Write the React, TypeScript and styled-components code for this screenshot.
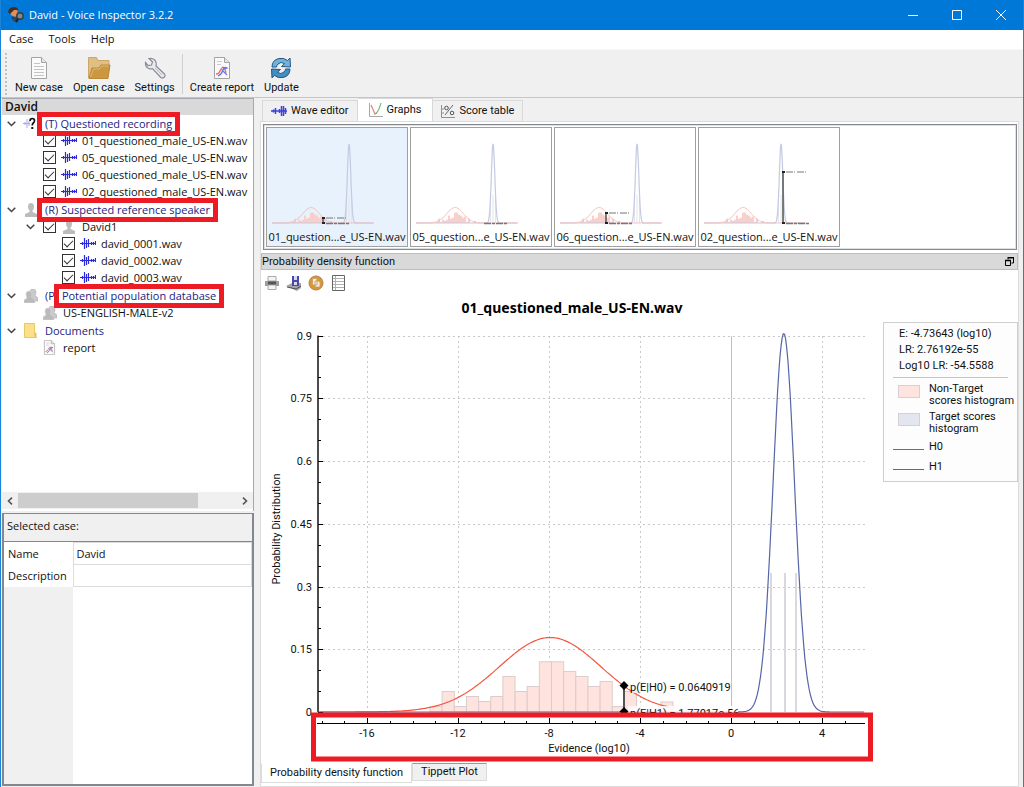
import React, { useState } from "react";
import styled, { createGlobalStyle, css } from "styled-components";

const UI = `"Open Sans", "Noto Sans", sans-serif`;
const COMPACT = `Roboto, "Liberation Sans", sans-serif`;

const GlobalStyle = createGlobalStyle`
  * { box-sizing: border-box; }
  body { margin: 0; background: #f0f0f0; }
  button, input { font: inherit; color: inherit; margin: 0; padding: 0; border: 0; background: none; border-radius: 0; }
  svg { display: block; }
`;

/* ---------- window frame ---------- */

const Window = styled.div`
  display: flex;
  flex-direction: column;
  min-height: 100vh;
  border: 1px solid #1c83d8;
  border-top: 0;
  background: #f0f0f0;
  color: #111;
  font: 11px/16px ${UI};
`;

const TitleBar = styled.header`
  display: flex;
  align-items: center;
  height: 30px;
  padding-left: 7px;
  background: #0078d7;
  color: #fff;
`;

const WindowTitle = styled.h1`
  flex: 1;
  margin: 0 0 0 4px;
  font: 11px/16px ${UI};
`;

const CaptionButton = styled.button`
  display: grid;
  place-items: center;
  width: 44px;
  height: 30px;
`;

const MenuBar = styled.nav`
  display: flex;
  align-items: flex-start;
  gap: 15px;
  height: 20px;
  padding: 0 8px;
  background: #fff;
  border-bottom: 1px solid #f6f6f6;
`;

const MenuButton = styled.button`
  line-height: 18px;
`;

const Toolbar = styled.div`
  display: flex;
  align-items: center;
  gap: 10px;
  height: 48px;
  padding-left: 4px;
  border-bottom: 1px solid #c6c6c6;
`;

const Grip = styled.span`
  width: 0;
  height: 42px;
  margin-right: -2px;
  border-left: 2px dotted #c2c2c2;
`;

const ToolButton = styled.button`
  display: flex;
  flex-direction: column;
  align-items: center;
  gap: 1px;
  padding-top: 6px;
  font: 11px/16px ${COMPACT};
`;

const Divider = styled.span`
  width: 1px;
  height: 40px;
  margin: 0 -3px;
  background: #cfcfcf;
`;

const Main = styled.main`
  display: grid;
  grid-template-columns: 252px minmax(0, 1fr);
  gap: 6px;
  flex: 1;
  padding-left: 1px;
  padding-right: 4px;
`;

/* ---------- left side ---------- */

const Side = styled.aside`
  display: flex;
  flex-direction: column;
  gap: 2px;
  padding-bottom: 1px;
`;

const TreePanel = styled.section`
  display: flex;
  flex-direction: column;
  flex: 1;
  border: 1px solid #a5a8ad;
  border-left: 0;
  border-bottom: 0;
  background: #fff;
`;

const TreeHeader = styled.h2`
  margin: 0;
  padding-left: 3px;
  background: #d9d9d9;
  font: 600 12px/16px ${UI};
`;

const Tree = styled.div`
  flex: 1;
`;

const Group = styled.div`
  margin-bottom: 1px;
`;

const Row = styled.div<{ $indent?: number }>`
  display: flex;
  align-items: center;
  height: 17px;
  padding-left: ${(p) => (p.$indent ?? 0) * 19}px;
  white-space: nowrap;
`;

const slot = css`
  display: grid;
  place-items: center;
  flex: none;
  width: 19px;
  height: 17px;
`;

const Slot = styled.span`
  ${slot}
`;

const Expander = styled.button`
  ${slot}
`;

const CheckLabel = styled.label`
  display: flex;
  align-items: center;
`;

const Check = styled.input`
  appearance: none;
  position: relative;
  flex: none;
  width: 13px;
  height: 13px;
  margin: 0 3px;
  border: 1px solid #333;
  background: #fff;

  &:checked::after {
    content: "";
    position: absolute;
    left: 3px;
    top: 1px;
    width: 8px;
    height: 4px;
    border: solid #333;
    border-width: 0 0 1px 1px;
    transform: translate(-2px, 1px) rotate(-45deg);
  }
`;

const ItemText = styled.span<{ $group?: boolean }>`
  padding-left: ${(p) => (p.$group ? 5 : 4)}px;
  color: ${(p) => (p.$group ? "#23237f" : "#111")};
`;

const Marked = styled.span<{ $shift?: boolean }>`
  position: relative;
  z-index: 1;
  margin-left: ${(p) => (p.$shift ? 7 : 0)}px;

  &::before {
    content: "";
    position: absolute;
    z-index: -1;
    inset: -4px -8px -5px;
    border: 5px solid #ed1c24;
    background: #fff;
  }
`;

const ScrollBar = styled.div`
  display: flex;
  align-items: center;
  height: 17px;
  margin-bottom: 2px;
  background: #f0f0f0;
`;

const ScrollArrow = styled.button`
  display: grid;
  place-items: center;
  width: 16px;
  height: 15px;
`;

const ScrollTrack = styled.div`
  flex: 1;
`;

const ScrollThumb = styled.div`
  width: 82%;
  height: 15px;
  background: #cdcdcd;
`;

const Properties = styled.section`
  display: flex;
  flex-direction: column;
  flex: 0 0 273px;
  border: 2px solid #828790;
  border-top-width: 1px;
  background: #fff;
`;

const PropertiesTitle = styled.h2`
  margin: 0;
  padding: 4px 3px 7px;
  border-bottom: 1px solid #828790;
  background: #f0f0f0;
  font: 11px/16px ${UI};
`;

const PropertyTable = styled.table`
  width: 100%;
  border-collapse: collapse;

  th {
    width: 69px;
    height: 22px;
    padding: 0 4px;
    text-align: left;
    font-weight: 400;
  }
  td {
    padding: 0 3px;
    border: 1px solid #dcdcdc;
  }
  input {
    display: block;
    width: 100%;
    height: 20px;
  }
`;

const PropertyFiller = styled.div`
  flex: 1;
  width: 69px;
  background: #f0f0f0;
`;

/* ---------- right side ---------- */

const Content = styled.section`
  display: flex;
  flex-direction: column;
  min-width: 0;
`;

const TabStrip = styled.div`
  display: flex;
  align-items: flex-end;
  height: 23px;
  padding-left: 2px;
`;

const Tab = styled.button<{ $active?: boolean }>`
  display: flex;
  align-items: center;
  gap: 4px;
  height: ${(p) => (p.$active ? 23 : 21)}px;
  padding: 0 ${(p) => (p.$active ? 11 : 8)}px;
  border: 1px solid #d9d9d9;
  border-bottom: 0;
  background: ${(p) => (p.$active ? "#fff" : "#f0f0f0")};
  font: 11px/16px ${COMPACT};
  & + & { border-left: 0; }
`;

const Page = styled.div`
  display: flex;
  flex-direction: column;
  flex: 1;
  padding-top: 2px;
  border: 1px solid #dcdcdc;
  background: #fff;
`;

const ThumbList = styled.div`
  display: flex;
  gap: 2px;
  margin: 0 1px 3px 2px;
  padding: 2px;
  border: 1px solid #828790;
  box-shadow: inset 0 0 0 1px #dfe1e4;
`;

const Thumb = styled.button<{ $active?: boolean }>`
  flex: none;
  width: 142px;
  padding-bottom: 1px;
  border: 1px solid #a0a0a0;
  background: ${(p) => (p.$active ? "#e8f2fc" : "#fff")};
  font: 11px/16px ${UI};
  white-space: nowrap;
`;

const DockHeader = styled.h2`
  display: flex;
  align-items: center;
  justify-content: space-between;
  height: 17px;
  margin: 0;
  border: 1px solid #bdbdbd;
  background: #d9d9d9;
  font: 11px/15px ${COMPACT};
`;

const GraphTools = styled.div`
  display: flex;
  gap: 6px;
  padding: 5px 3px 6px;
`;

const IconButton = styled.button`
  display: grid;
  place-items: center;
  width: 16px;
  height: 16px;
`;

const GraphArea = styled.div`
  display: grid;
  grid-template-columns: minmax(0, 1fr) 135px;
  align-items: start;
`;

const GraphTitle = styled.h3`
  margin: 0;
  padding-bottom: 6px;
  text-align: center;
  color: #000;
  font: bold 14px/22px "Noto Sans", sans-serif;
`;

const Plot = styled.svg`
  width: 100%;
  height: auto;
  font: 11px ${COMPACT};
`;

const Legend = styled.div`
  margin-top: 25px;
  padding: 3px 9px 6px;
  border: 1px solid #cfcfcf;
  background: #fdfdfd;
  font: 11px/12px ${COMPACT};
`;

const Stats = styled.div`
  margin-bottom: 5px;
  padding: 0 0 3px 6px;
  border-bottom: 1px solid #c4c4c4;
  line-height: 16px;
  white-space: nowrap;
`;

const LegendRows = styled.div`
  display: flex;
  flex-direction: column;
  gap: 4px;
`;

const LegendRow = styled.div<{ $line?: boolean }>`
  display: grid;
  grid-template-columns: 31px 1fr;
  gap: 5px;
  align-items: ${(p) => (p.$line ? "center" : "start")};
  line-height: ${(p) => (p.$line ? 16 : 12)}px;
  white-space: nowrap;
`;

const Swatch = styled.span<{ $color: string }>`
  width: 22px;
  height: 13px;
  margin: 2px auto 0;
  border: 1px solid #d6d0d4;
  background: ${(p) => p.$color};
`;

const LineSample = styled.span<{ $color: string }>`
  margin-top: 4px;
  border-top: 1px solid ${(p) => p.$color};
`;

const BottomTabs = styled.div`
  display: flex;
  align-items: flex-start;
  margin-top: auto;
  padding-bottom: 3px;
`;

const BottomTab = styled.button<{ $active?: boolean }>`
  height: ${(p) => (p.$active ? 20 : 18)}px;
  padding: 0 8px;
  border: 1px solid #dcdcdc;
  border-top-color: ${(p) => (p.$active ? "#fff" : "#9a9a9a")};
  background: ${(p) => (p.$active ? "#fff" : "#f0f0f0")};
  font: 11px/16px ${COMPACT};
`;

/* ---------- icons ---------- */

const AppIcon = () => (
  <svg width="17" height="16" viewBox="0 0 17 16">
    <path d="M2 4Q5 0 9 3l1 4-3 3-4-2Z" fill="#e0905a" />
    <path d="M0 5Q1 0 6 0q4 0 4 3L6 3 4 5 2 7Z" fill="#4a2c1e" />
    <path d="M3 10q2-1 4 0l3 1v4q-5 1-7-5Z" fill="#30445a" />
    <circle cx="12" cy="9" r="3.200" fill="#7d8890" stroke="#3a3a3a" strokeWidth="1.400" />
    <path d="m10 12-2 3" stroke="#222" strokeWidth="2" />
  </svg>
);

const DocIcon = ({ chart = false, size = 22 }: { chart?: boolean; size?: number }) => (
  <svg width={size} height={size} viewBox="0 0 22 22">
    <path d="M3.500.5h10l5 5v16h-15Z" fill="#fafafa" stroke="#a3a3a3" />
    <path d="M13.500.5v5h5" fill="#e6e6e6" stroke="#a3a3a3" />
    {chart ? (
      <>
        <path d="M6 4.500h5M6 7.500h4" stroke="#c9c9c9" />
        <path d="M5 17q3 0 4-3t3-4q2 1 3 6" fill="none" stroke="#ee6a6a" strokeWidth="1.300" />
        <path d="M7 19q4-2 5-6t4-2l-5 2 5 5" fill="none" stroke="#6a79e8" strokeWidth="1.300" />
      </>
    ) : (
      <path d="M6 6.500h6M6 9.500h10M6 12.500h10M6 15.500h10M6 18.500h10" stroke="#c4c4c4" />
    )}
  </svg>
);

const OpenFolderIcon = () => (
  <svg width="24" height="22" viewBox="0 0 24 22">
    <path d="M1.500 21V.5h8l1.500 3h11V12L20 21Z" fill="#e0bf86" stroke="#cfa765" />
    <path d="M2 21.500 5 11h7l2-3h9l-2 13.500Z" fill="#cb9740" stroke="#ba8838" />
    <path d="m3.500 20 3-8h6l2-3h7" fill="none" stroke="#e0b873" />
  </svg>
);

const WrenchIcon = () => (
  <svg width="22" height="22" viewBox="0 0 22 22">
    <path
      d="M5 1.500 8.500 5 7.500 8 4 8.500 1.500 5.500Q1 10 4.500 11.500q2 .8 4 .2l8 8.500q2 1.500 3.700 0t0-3.500L12 9q1-4-1.500-6.300Q8 .8 5 1.500Z"
      fill="#e8e9ee"
      stroke="#8b8d97"
      strokeWidth="1.200"
    />
    <path d="m11 11 7 7" stroke="#b9bbc4" />
  </svg>
);

const UpdateIcon = () => (
  <svg width="22" height="22" viewBox="0 0 22 22">
    <path d="M2 10Q2 3 9 1.500q5-1 8.500 2L20 1l.5 9-9-.5 3-2.800Q11 4 8 7q-1.500 1.500-1.500 3Z" fill="#6fb2dc" stroke="#25587e" />
    <path d="M20 12q0 7-7 8.500-5 1-8.500-2L2 21l-.5-9 9 .5-3 2.800Q11 18 14 15q1.500-1.500 1.500-3Z" fill="#3f8fc4" stroke="#25587e" />
  </svg>
);

const WaveIcon = () => (
  <svg width="16" height="13" viewBox="0 0 16 13">
    <path
      d="M0 6.500h16M2.500 5v3M4.500 1v11M6.500 3v8M8.500 2v8M11.500 5v3M13.500 5v3M15.500 4v4"
      stroke="#2a2ad8"
      strokeWidth="1.200"
    />
  </svg>
);

const QuestionWaveIcon = () => (
  <svg width="15" height="13" viewBox="0 0 15 13">
    <path d="M0 6.500h7M2 5v3M4 2v9M6 4v5" stroke="#a9a9f2" />
    <path d="M7 4q0-2.500 2.300-2.500T11.500 4q0 1-1.200 2T9.300 8.500" fill="none" stroke="#111" strokeWidth="1.700" />
    <path d="M8.300 10h2v2h-2Z" fill="#111" />
  </svg>
);

const WaveEditorIcon = () => (
  <svg width="16" height="12" viewBox="0 0 16 12">
    <path d="M0 6h16M4.500 3v6M2.500 4.500v3M8.500 4v4M10.500 1v10M12.500 1v10M14.500 3v6" stroke="#4040d8" strokeWidth="1.500" />
  </svg>
);

const PersonIcon = () => (
  <svg width="14" height="14" viewBox="0 0 14 14">
    <path d="M4 4q0-4 3-4t3 4q0 2-1.500 3.500V9L13 11v3H1v-3l4.500-2V7.500Q4 6 4 4Z" fill="#bcbcbc" />
  </svg>
);

const PeopleIcon = () => (
  <svg width="14" height="14" viewBox="0 0 14 14">
    <path d="M6 3q0-3 3-3t3 3.500Q12 5 11 6.500L14 9v3H7Z" fill="#c9c9c9" stroke="#b0b0b0" strokeWidth=".6" />
    <path d="M2 5q0-3 3-3t3 3q0 2-1 3l4 3v3H0v-3l3-2Q2 7 2 5Z" fill="#bababa" stroke="#d8d8d8" strokeWidth=".6" />
  </svg>
);

const FolderIcon = () => (
  <svg width="13" height="15" viewBox="0 0 13 15">
    <path d="M.5.500h10V12l2 2.500H.5Z" fill="#fbe08c" stroke="#e9c966" />
    <path d="M10.500 9v5.500h2V10Z" fill="#e8c560" />
  </svg>
);

const GraphsIcon = () => (
  <svg width="14" height="14" viewBox="0 0 14 14">
    <path d="M.5 0v13.500H14" fill="none" stroke="#a9a9a9" />
    <path d="m2 2 4 9 2-1" fill="none" stroke="#ee7a70" strokeWidth="1.200" />
    <path d="M5 11q4 0 7-11" fill="none" stroke="#73bd7b" strokeWidth="1.200" />
  </svg>
);

const ScoreIcon = () => (
  <svg width="14" height="13" viewBox="0 0 14 13">
    <path d="M.5 0v12.500H14M1 4h2M1 8h2" fill="none" stroke="#909090" />
    <circle cx="5.500" cy="3" r="1.800" fill="none" stroke="#555" />
    <circle cx="11" cy="8" r="1.800" fill="none" stroke="#555" />
    <path d="m12 0-8 10" stroke="#666" />
  </svg>
);

const PrintIcon = () => (
  <svg width="16" height="14" viewBox="0 0 16 14">
    <path d="M1 5h14v5H1Z" fill="#9d9d9d" />
    <path d="M4 .5h8V5H4ZM4 9h8v4.500H4Z" fill="#f4f4f4" stroke="#a8a8a8" />
    <path d="M4 5.500h8v3H4Z" fill="#555" />
  </svg>
);

const ExportIcon = () => (
  <svg width="16" height="15" viewBox="0 0 16 15">
    <path d="m0 10 6-3h9v5l-4 3Z" fill="#a4a4aa" />
    <path d="m1 11 9 2 5-3" stroke="#4c4c55" fill="none" />
    <path d="M6 0h7v10H6Z" fill="#4a4aa6" />
    <path d="M8 0h3v4H8ZM8 6h3v3H8Z" fill="#d9d9f2" />
  </svg>
);

const CopyIcon = () => (
  <svg width="16" height="16" viewBox="0 0 16 16">
    <circle cx="8" cy="8" r="7" fill="#dd9632" stroke="#a88450" />
    <path d="M4.500 3.500H8l1 1V10H4.500ZM7 6h3.500l1.500 1.500V12H7Z" fill="#f7eedd" stroke="#c79a5c" strokeWidth=".8" />
  </svg>
);

const ListIcon = () => (
  <svg width="13" height="16" viewBox="0 0 13 16">
    <path d="M.5.500h12v15H.5Z" fill="#fff" stroke="#666" />
    <path d="M3.500 1v14M1 3.500h11M1 6.500h11M1 9.500h11M1 12.500h11" stroke="#b0b0b0" />
  </svg>
);

const Chevron = () => (
  <svg width="9" height="6" viewBox="0 0 9 6">
    <path d="m.7.700 3.800 3.800L8.300.7" fill="none" stroke="#444" strokeWidth="1.500" />
  </svg>
);

const SideArrow = ({ right = false }: { right?: boolean }) => (
  <svg width="6" height="8" viewBox="0 0 6 8">
    <path d={right ? "m1 .7 3.500 3.300L1 7.300" : "M5 .7 1.500 4 5 7.300"} fill="none" stroke="#555" strokeWidth="1.600" />
  </svg>
);

/* ---------- tree ---------- */

const Recording = ({ name, indent }: { name: string; indent: number }) => (
  <Row $indent={indent}>
    <CheckLabel>
      <Check type="checkbox" defaultChecked />
      <Slot><WaveIcon /></Slot>
      <ItemText>{name}</ItemText>
    </CheckLabel>
  </Row>
);

const GroupRow = ({ icon, children }: { icon: React.ReactNode; children: React.ReactNode }) => (
  <Row>
    <Expander aria-label="Collapse group"><Chevron /></Expander>
    <Slot>{icon}</Slot>
    <ItemText $group>{children}</ItemText>
  </Row>
);

const CaseTree = () => (
  <Tree>
    <Group>
      <GroupRow icon={<QuestionWaveIcon />}><Marked>(T) Questioned recording</Marked></GroupRow>
      {["01", "05", "06", "02"].map((n) => (
        <Recording key={n} name={`${n}_questioned_male_US-EN.wav`} indent={2} />
      ))}
    </Group>
    <Group>
      <GroupRow icon={<PersonIcon />}><Marked>(R) Suspected reference speaker</Marked></GroupRow>
      <Row $indent={1}>
        <Expander aria-label="Collapse David1"><Chevron /></Expander>
        <CheckLabel>
          <Check type="checkbox" defaultChecked />
          <Slot><PersonIcon /></Slot>
          <ItemText>David1</ItemText>
        </CheckLabel>
      </Row>
      {[1, 2, 3].map((n) => (
        <Recording key={n} name={`david_000${n}.wav`} indent={3} />
      ))}
    </Group>
    <Group>
      <GroupRow icon={<PeopleIcon />}>(P<Marked $shift>Potential population database</Marked></GroupRow>
      <Row $indent={2}>
        <Slot><PeopleIcon /></Slot>
        <ItemText>US-ENGLISH-MALE-v2</ItemText>
      </Row>
    </Group>
    <Group>
      <GroupRow icon={<FolderIcon />}>Documents</GroupRow>
      <Row $indent={2}>
        <Slot><DocIcon chart size={15} /></Slot>
        <ItemText>report</ItemText>
      </Row>
    </Group>
  </Tree>
);

/* ---------- charts ---------- */

const gauss = (mean: number, sigma: number, peak: number) => (e: number) =>
  peak * Math.exp(-((e - mean) ** 2) / (2 * sigma * sigma));

const h0 = gauss(-7.95, 2.24, 0.178);
const h1 = gauss(2.32, 0.47, 0.905);

const px = (e: number) => 470 + e * 22.75;
const py = (p: number) => 387 - p * 418.3;

const curve = (f: (e: number) => number, from: number, to: number, x = px, y = py) => {
  const points: string[] = [];
  for (let e = from; e <= to; e += 0.05) points.push(`${x(e).toFixed(1)},${y(f(e)).toFixed(1)}`);
  return points.join(" ");
};

const bins = [
  0.013, 0.049, 0.013, 0.037, 0.025, 0.037, 0.085, 0.049, 0.061, 0.12, 0.12, 0.097, 0.085, 0.061, 0.073, 0.013,
  0.049, 0, 0, 0.024,
];
const binWidth = 12.15;
const binStart = 169;

const yTicks = [0, 0.15, 0.3, 0.45, 0.6, 0.75, 0.9];
const xTicks = [-16, -12, -8, -4, 0, 4];
const minorX = Array.from({ length: 24 }, (_, i) => i - 18);
const minorY = Array.from({ length: 18 }, (_, i) => i * 0.05);

const DensityPlot = () => (
  <Plot viewBox="0 0 622 438" role="img" aria-label="Probability density function">
    <g stroke="#c9c9c9" strokeDasharray="2 3">
      {yTicks.slice(1).map((t) => <line key={t} x1="57" x2="604" y1={Math.round(py(t)) + 0.5} y2={Math.round(py(t)) + 0.5} />)}
      {xTicks.filter((t) => t !== 0).map((t) => <line key={t} y1="11" y2="387" x1={Math.round(px(t)) + 0.5} x2={Math.round(px(t)) + 0.5} />)}
    </g>
    <line x1="470.500" x2="470.500" y1="11" y2="387" stroke="#c0c0c0" />

    <g fill="#fee3df" stroke="#dccccb">
      {bins.map((b, i) => b > 0 && (
        <rect key={i} x={binStart + i * binWidth} width={binWidth} y={py(b)} height={387 - py(b)} />
      ))}
    </g>
    <g fill="#d8d8de">
      <rect x="509" y="248" width="2" height="139" />
      <rect x="523" y="248" width="2" height="139" />
      <rect x="534" y="248" width="2" height="139" />
    </g>

    <polyline points={curve(h0, -18.1, -2.7)} fill="none" stroke="#f4553f" strokeWidth="1.200" />
    <polyline points={curve(h0, -2.7, 0.3)} fill="none" stroke="#fbc9c2" />
    <polyline points={curve(h1, -18.1, 5.9)} fill="none" stroke="#5566a8" strokeWidth="1.200" />

    <path d="M363 360v27" stroke="#555" strokeWidth="2" />
    <path d="M367 354h102v14H371v-4h-4Z" fill="#fff" fillOpacity=".7" />
    <path d="M367 381h110v8H367Z" fill="#fff" fillOpacity=".8" />
    <path d="m363 356 4.500 4.500-4.500 4.500-4.500-4.500ZM363 382l4.500 4.500-4.500 4.500-4.500-4.500Z" fill="#000" />
    <g fill="#111">
      <text x="369" y="366">p(E|H0) = 0.0640919</text>
      <text x="369" y="392">p(E|H1) = 1.77017e-56</text>
    </g>

    <g stroke="#000" fill="none">
      <path d="M57 10.500V387" strokeWidth="1.400" />
      {yTicks.map((t) => <line key={t} x1="57" x2="62" y1={Math.round(py(t)) + 0.5} y2={Math.round(py(t)) + 0.5} />)}
      {minorY.map((t) => <line key={t} x1="57" x2="60" y1={Math.round(py(t)) + 0.5} y2={Math.round(py(t)) + 0.5} />)}
    </g>
    <g fill="#111" textAnchor="end">
      {yTicks.map((t) => <text key={t} x="51" y={Math.round(py(t)) + 4}>{t}</text>)}
    </g>
    <text transform="translate(19 204) rotate(-90)" textAnchor="middle" fill="#111">Probability Distribution</text>

    <rect x="52.500" y="390" width="557" height="44" fill="#fff" stroke="#ed1c24" strokeWidth="5" />
    <g stroke="#000">
      <path d="M56 398.500H604" />
      {xTicks.map((t) => <line key={t} y1="393" y2="398" x1={Math.round(px(t)) + 0.5} x2={Math.round(px(t)) + 0.5} />)}
      {minorX.map((t) => <line key={t} y1="396" y2="398" x1={Math.round(px(t)) + 0.5} x2={Math.round(px(t)) + 0.5} />)}
    </g>
    <g fill="#111" textAnchor="middle">
      {xTicks.map((t) => <text key={t} x={px(t)} y="412">{t}</text>)}
      <text x="328" y="427">Evidence (log10)</text>
    </g>
  </Plot>
);

const tx = (e: number) => 82 - 2.3 * 3.7 + e * 3.7;
const ty = (p: number) => 95 - p * 87;

type ThumbData = { id: string; marker?: number; top?: number; text: number };

const ThumbPlot = ({ marker, top = 95, text }: ThumbData) => (
  <svg width="140" height="101" viewBox="0 0 140 101">
    <g fill="#f8cfca">
      {bins.map((b, i) => <rect key={i} x={25 + i * 2} width="2" y={ty(b)} height={95 - ty(b)} />)}
    </g>
    <path d="M82 67v28M79.500 67v28M84.500 67v28" stroke="#e3e4ec" />
    <polyline points={curve(h1, -18.5, 9, tx, ty)} fill="none" stroke="#c3cae2" strokeWidth="1.200" />
    <polyline points={curve(h0, -18.5, 9, tx, ty)} fill="none" stroke="#f5bab3" />
    {marker !== undefined && (
      <>
        <path d={`M${marker} ${top}V96`} stroke="#555" strokeWidth="1.500" />
        <path d={`M${marker - 1} ${top}h3M${marker - 1} 95h3`} stroke="#222" strokeWidth="2" />
        <path d={`M${marker + 3} ${top}h20`} stroke="#777" strokeDasharray="7 1 1 2" />
      </>
    )}
    <path d={`M${text} 95.500h24`} stroke="#777" strokeWidth="1.500" strokeDasharray="7 1 3 1" />
  </svg>
);

const thumbs: ThumbData[] = [
  { id: "01", marker: 56, top: 90, text: 59 },
  { id: "05", text: 73 },
  { id: "06", marker: 51, top: 85, text: 54 },
  { id: "02", marker: 84, top: 44, text: 87 },
];

/* ---------- application ---------- */

export default function App() {
  const [thumb, setThumb] = useState("01");
  const [name, setName] = useState("David");
  const [description, setDescription] = useState("");

  return (
    <>
      <GlobalStyle />
      <Window>
        <TitleBar>
          <AppIcon />
          <WindowTitle>David - Voice Inspector 3.2.2</WindowTitle>
          <CaptionButton aria-label="Minimize">
            <svg width="10" height="10" viewBox="0 0 10 10"><path d="M0 5.500h10" stroke="#fff" /></svg>
          </CaptionButton>
          <CaptionButton aria-label="Maximize">
            <svg width="10" height="10" viewBox="0 0 10 10"><path d="M.5.500h9v9h-9Z" fill="none" stroke="#fff" /></svg>
          </CaptionButton>
          <CaptionButton aria-label="Close">
            <svg width="10" height="10" viewBox="0 0 10 10"><path d="m0 0 10 10M10 0 0 10" stroke="#fff" /></svg>
          </CaptionButton>
        </TitleBar>

        <MenuBar>
          <MenuButton>Case</MenuButton>
          <MenuButton>Tools</MenuButton>
          <MenuButton>Help</MenuButton>
        </MenuBar>

        <Toolbar>
          <Grip />
          <ToolButton><DocIcon />New case</ToolButton>
          <ToolButton><OpenFolderIcon />Open case</ToolButton>
          <ToolButton><WrenchIcon />Settings</ToolButton>
          <Divider />
          <ToolButton><DocIcon chart />Create report</ToolButton>
          <ToolButton><UpdateIcon />Update</ToolButton>
        </Toolbar>

        <Main>
          <Side>
            <TreePanel>
              <TreeHeader>David</TreeHeader>
              <CaseTree />
              <ScrollBar>
                <ScrollArrow aria-label="Scroll left"><SideArrow /></ScrollArrow>
                <ScrollTrack><ScrollThumb /></ScrollTrack>
                <ScrollArrow aria-label="Scroll right"><SideArrow right /></ScrollArrow>
              </ScrollBar>
            </TreePanel>
            <Properties>
              <PropertiesTitle>Selected case:</PropertiesTitle>
              <PropertyTable>
                <tbody>
                  <tr>
                    <th scope="row"><label htmlFor="case-name">Name</label></th>
                    <td><input id="case-name" value={name} onChange={(e) => setName(e.target.value)} /></td>
                  </tr>
                  <tr>
                    <th scope="row"><label htmlFor="case-description">Description</label></th>
                    <td><input id="case-description" value={description} onChange={(e) => setDescription(e.target.value)} /></td>
                  </tr>
                </tbody>
              </PropertyTable>
              <PropertyFiller />
            </Properties>
          </Side>

          <Content>
            <TabStrip>
              <Tab><WaveEditorIcon />Wave editor</Tab>
              <Tab $active><GraphsIcon />Graphs</Tab>
              <Tab><ScoreIcon />Score table</Tab>
            </TabStrip>
            <Page>
              <ThumbList>
                {thumbs.map((t) => (
                  <Thumb key={t.id} $active={t.id === thumb} onClick={() => setThumb(t.id)}>
                    <ThumbPlot {...t} />
                    {t.id}_question...e_US-EN.wav
                  </Thumb>
                ))}
              </ThumbList>
              <DockHeader>
                Probability density function
                <IconButton aria-label="Float panel">
                  <svg width="9" height="9" viewBox="0 0 9 9">
                    <path d="M3 .5h5.500V6H6.500M3 2.500V0M.5 3.500h5v5h-5Z" fill="none" stroke="#000" />
                    <path d="M0 3.500h6M3 .8h6" stroke="#000" strokeWidth="1.600" />
                  </svg>
                </IconButton>
              </DockHeader>
              <GraphTools>
                <IconButton aria-label="Print"><PrintIcon /></IconButton>
                <IconButton aria-label="Export"><ExportIcon /></IconButton>
                <IconButton aria-label="Copy"><CopyIcon /></IconButton>
                <IconButton aria-label="Legend"><ListIcon /></IconButton>
              </GraphTools>
              <GraphArea>
                <div>
                  <GraphTitle>01_questioned_male_US-EN.wav</GraphTitle>
                  <DensityPlot />
                </div>
                <Legend>
                  <Stats>
                    <div>E: -4.73643 (log10)</div>
                    <div>LR: 2.76192e-55</div>
                    <div>Log10 LR: -54.5588</div>
                  </Stats>
                  <LegendRows>
                    <LegendRow><Swatch $color="#fee3df" /><span>Non-Target<br />scores histogram</span></LegendRow>
                    <LegendRow><Swatch $color="#e3e5ef" /><span>Target scores<br />histogram</span></LegendRow>
                    <LegendRow $line><LineSample $color="#f03a24" />H0</LegendRow>
                    <LegendRow $line><LineSample $color="#5566a8" />H1</LegendRow>
                  </LegendRows>
                </Legend>
              </GraphArea>
              <BottomTabs>
                <BottomTab $active>Probability density function</BottomTab>
                <BottomTab>Tippett Plot</BottomTab>
              </BottomTabs>
            </Page>
          </Content>
        </Main>
      </Window>
    </>
  );
}
